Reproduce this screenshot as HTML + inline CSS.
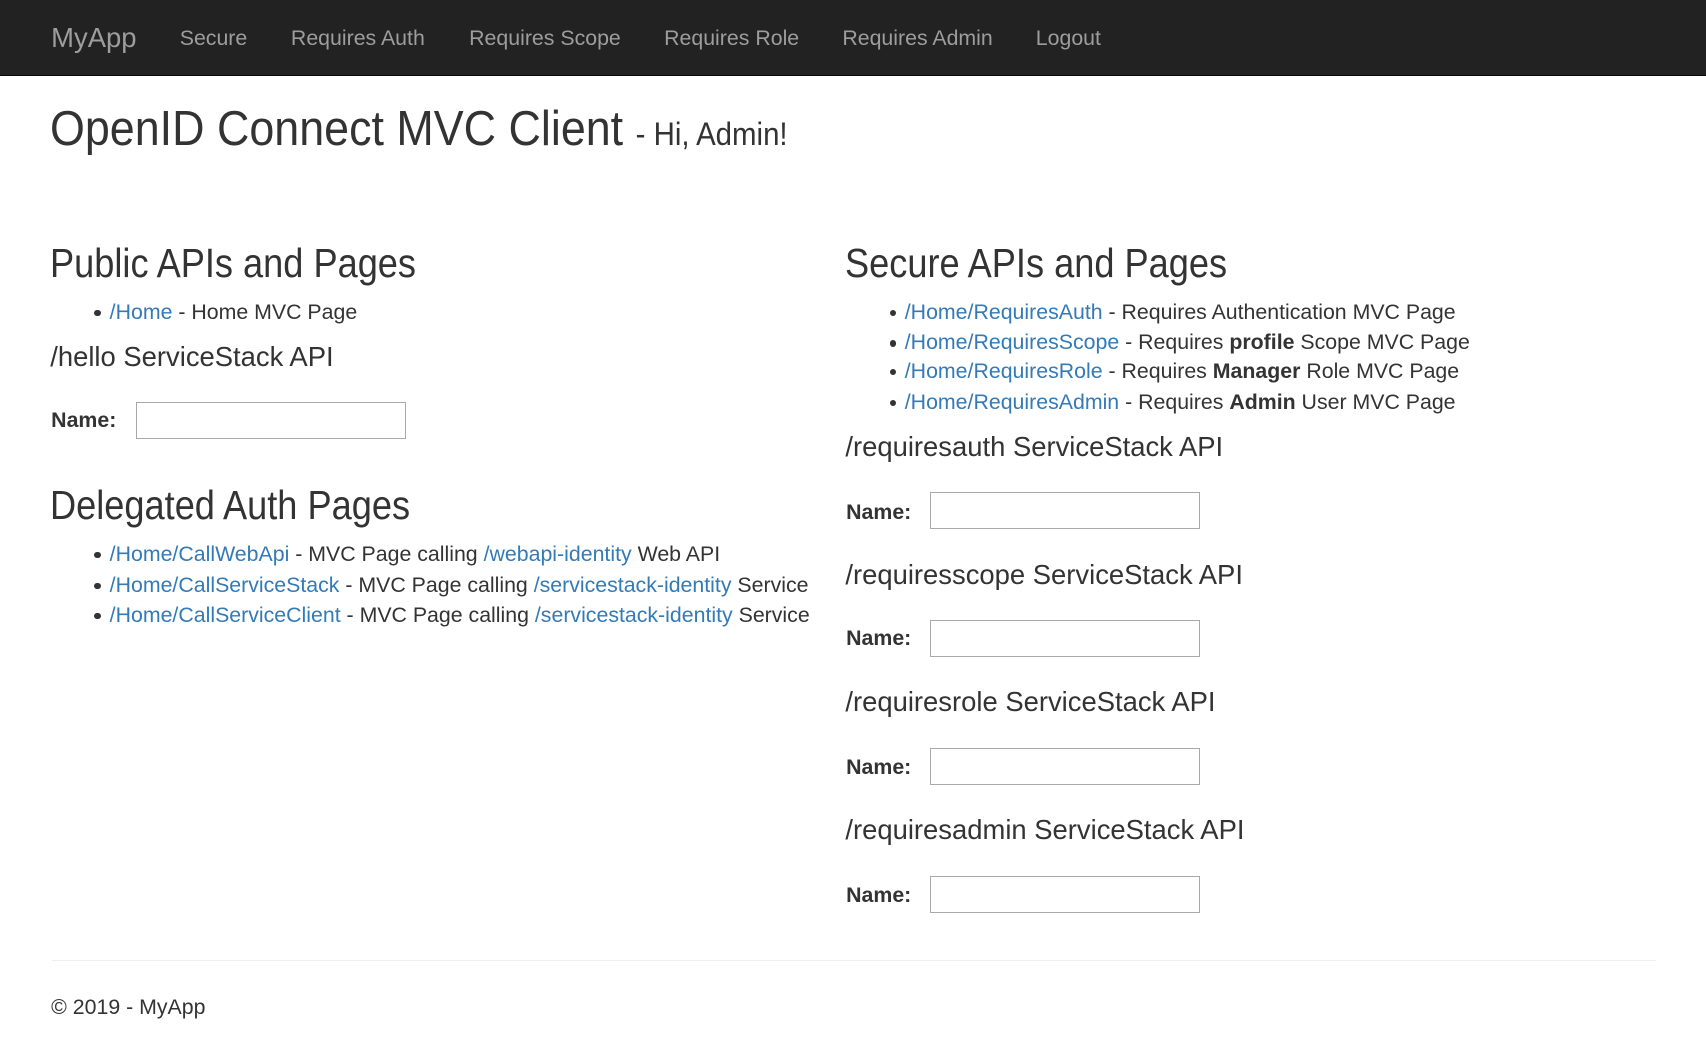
<!DOCTYPE html>
<html><head><meta charset="utf-8">
<style>
html{zoom:1.5232}
body{margin:0;width:1120px;height:690px;position:relative;background:#fff;font-family:"Liberation Sans",Arial,sans-serif;color:#333;font-size:14px;overflow:hidden}
.a{position:absolute;white-space:nowrap}
nav{position:absolute;left:0;top:0;width:1120px;height:49px;background:#222;border-bottom:1px solid #080808}
nav span{position:absolute;top:0;line-height:50px;color:#9d9d9d;font-size:14px}
nav .brand{font-size:18px}
a{color:#337ab7;text-decoration:none}
h1,h2,h4{margin:0;font-weight:400;position:absolute;white-space:nowrap;transform-origin:0 50%}
h1{font-size:32px;line-height:36px;transform:scaleX(0.92)}
h1 small{font-size:21px;color:#333}
h2{font-size:27px;line-height:30px;transform:scaleX(0.88)}
h4{font-size:18px;line-height:18px}
.li{position:absolute;line-height:20px;white-space:nowrap}
.li:before{content:"";position:absolute;left:-10px;top:8.5px;width:4px;height:4px;border-radius:50%;background:#333}
.lbl{position:absolute;font-weight:bold;line-height:20px}
.in{position:absolute;width:176px;height:23px;border:1px solid #a9a9a9;background:#fff}
hr{position:absolute;left:34px;top:630px;width:1053px;margin:0;border:0;border-top:1px solid #eee}
</style></head><body>
<nav>
<span class="brand" style="left:33.6px">MyApp</span>
<span style="left:118px">Secure</span>
<span style="left:191px">Requires Auth</span>
<span style="left:308px">Requires Scope</span>
<span style="left:436px">Requires Role</span>
<span style="left:553px">Requires Admin</span>
<span style="left:680px">Logout</span>
</nav>
<h1 style="left:33px;top:67px">OpenID Connect MVC Client <small>- Hi, Admin!</small></h1>

<h2 style="left:33px;top:158px">Public APIs and Pages</h2>
<div class="li" style="left:72px;top:195px"><a>/Home</a> - Home MVC Page</div>
<h4 style="left:33px;top:225px">/hello ServiceStack API</h4>
<div class="lbl" style="left:33.6px;top:266px">Name:</div>
<div class="in" style="left:89px;top:264px"></div>

<h2 style="left:33px;top:317px">Delegated Auth Pages</h2>
<div class="li" style="left:72px;top:354px"><a>/Home/CallWebApi</a> - MVC Page calling <a>/webapi-identity</a> Web API</div>
<div class="li" style="left:72px;top:374px"><a>/Home/CallServiceStack</a> - MVC Page calling <a>/servicestack-identity</a> Service</div>
<div class="li" style="left:72px;top:394px"><a>/Home/CallServiceClient</a> - MVC Page calling <a>/servicestack-identity</a> Service</div>

<h2 style="left:555px;top:158px">Secure APIs and Pages</h2>
<div class="li" style="left:594px;top:195px"><a>/Home/RequiresAuth</a> - Requires Authentication MVC Page</div>
<div class="li" style="left:594px;top:215px"><a>/Home/RequiresScope</a> - Requires <b>profile</b> Scope MVC Page</div>
<div class="li" style="left:594px;top:234px"><a>/Home/RequiresRole</a> - Requires <b>Manager</b> Role MVC Page</div>
<div class="li" style="left:594px;top:254px"><a>/Home/RequiresAdmin</a> - Requires <b>Admin</b> User MVC Page</div>

<h4 style="left:555px;top:284px">/requiresauth ServiceStack API</h4>
<div class="lbl" style="left:555.5px;top:326px">Name:</div>
<div class="in" style="left:610.7px;top:323px"></div>
<h4 style="left:555px;top:368px">/requiresscope ServiceStack API</h4>
<div class="lbl" style="left:555.5px;top:409px">Name:</div>
<div class="in" style="left:610.7px;top:407px"></div>
<h4 style="left:555px;top:452px">/requiresrole ServiceStack API</h4>
<div class="lbl" style="left:555.5px;top:494px">Name:</div>
<div class="in" style="left:610.7px;top:491px"></div>
<h4 style="left:555px;top:536px">/requiresadmin ServiceStack API</h4>
<div class="lbl" style="left:555.5px;top:578px">Name:</div>
<div class="in" style="left:610.7px;top:575px"></div>

<hr>
<div class="a" style="left:33.6px;top:651px;line-height:20px">© 2019 - MyApp</div>
</body></html>
